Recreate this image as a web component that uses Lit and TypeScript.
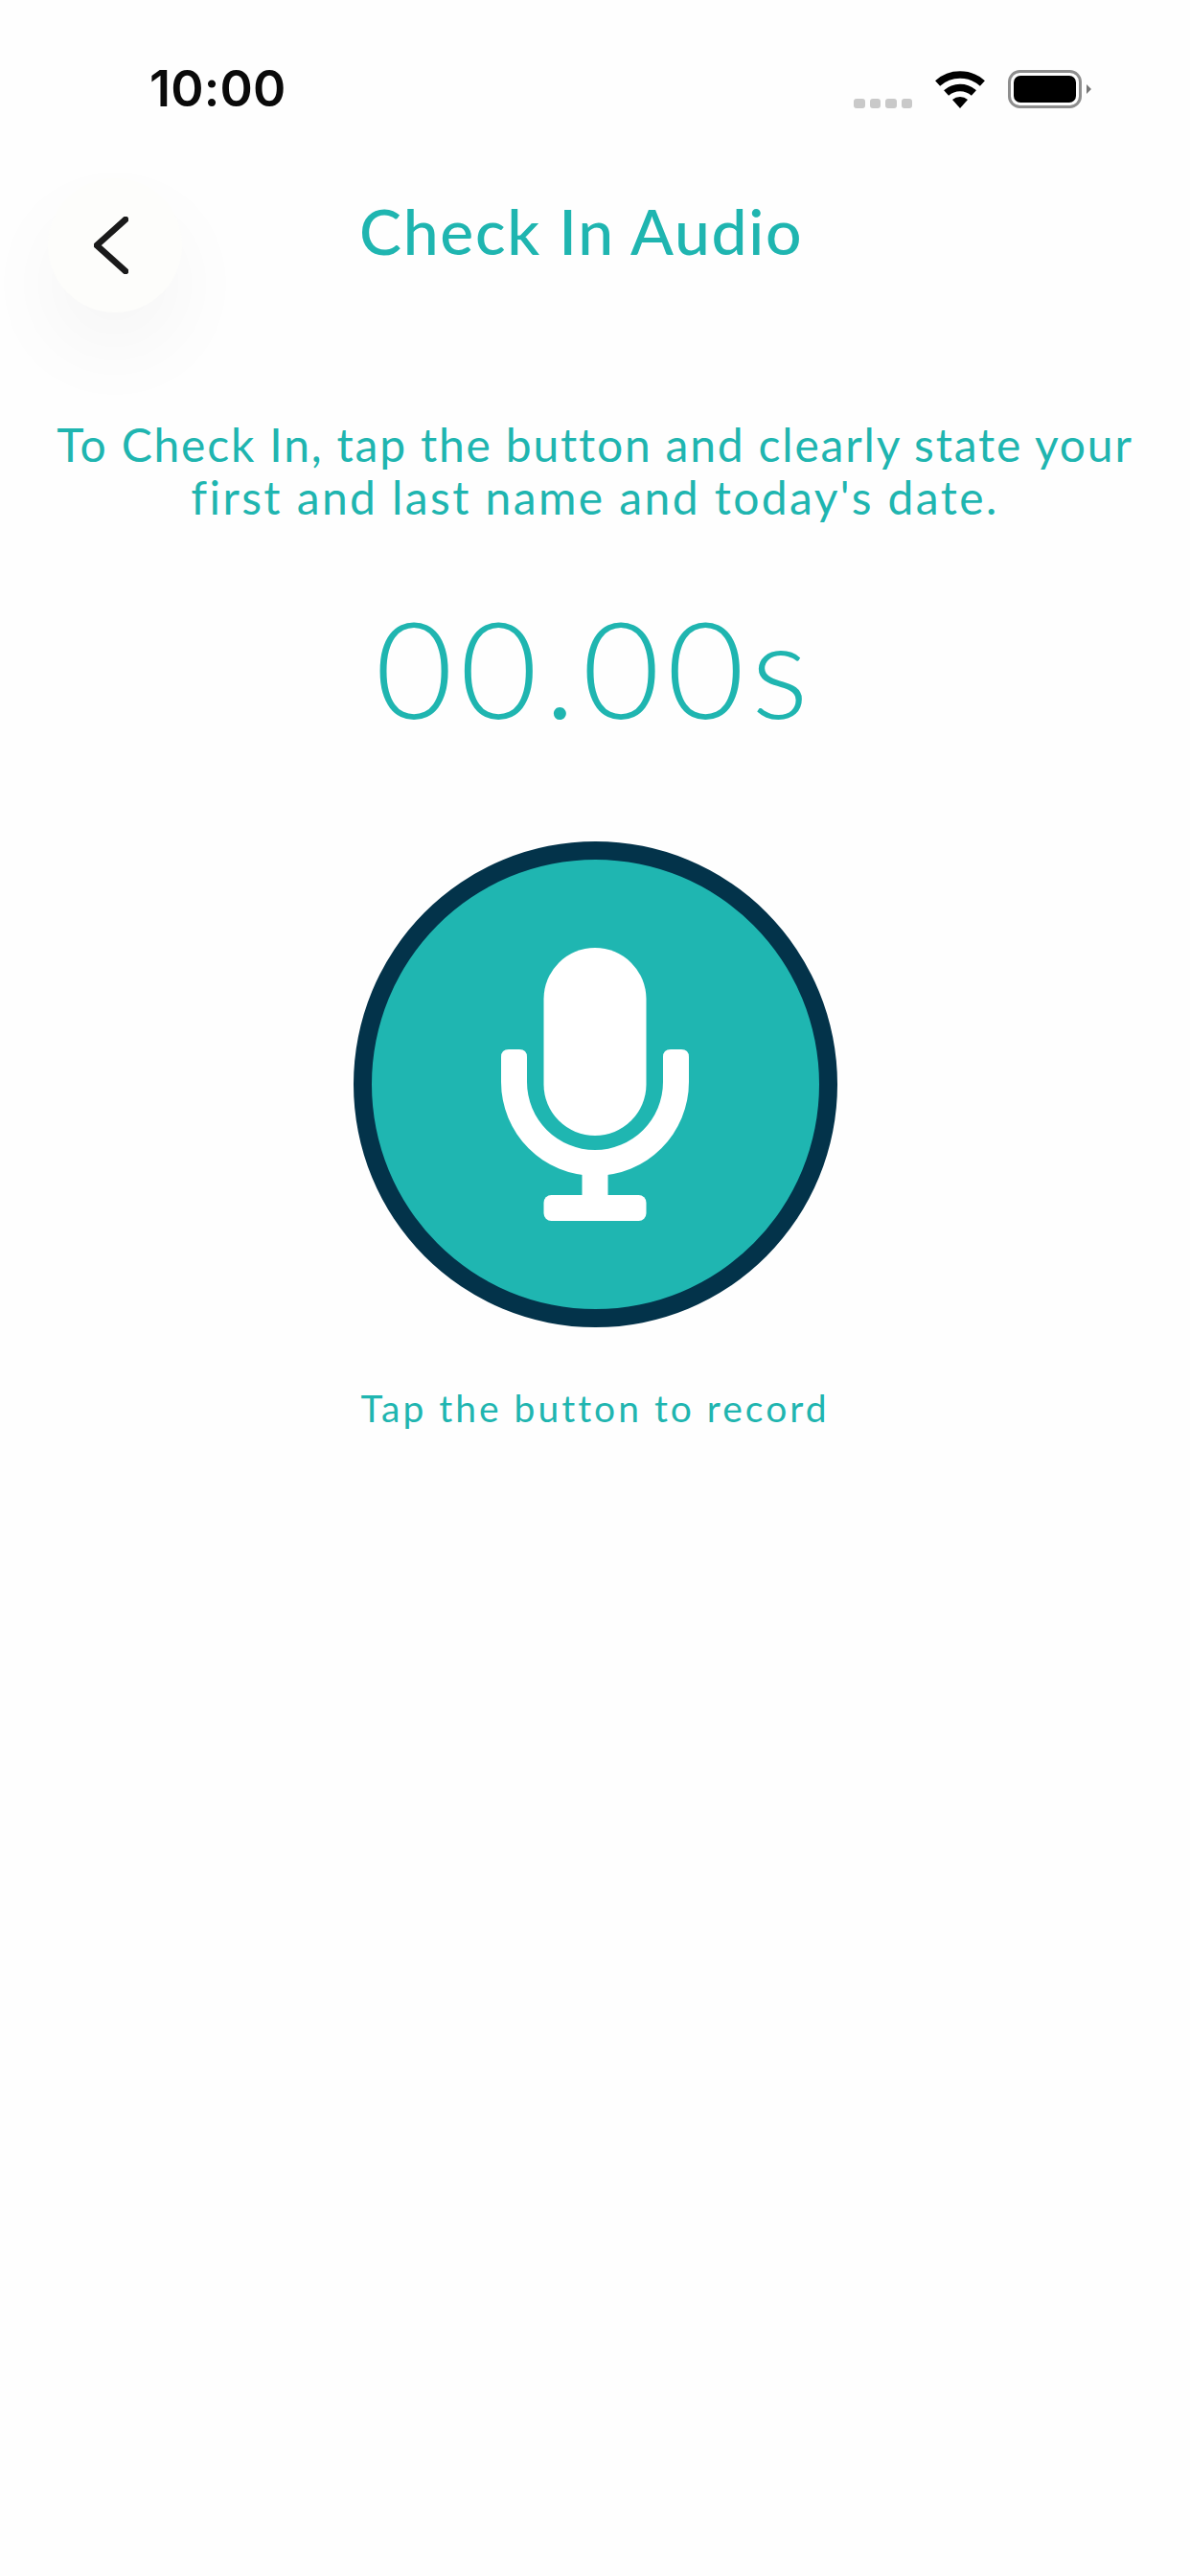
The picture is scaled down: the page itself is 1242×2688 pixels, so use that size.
import { LitElement, html, css } from "lit";
import { customElement } from "lit/decorators.js";

@customElement("app-root")
export class AppRoot extends LitElement {
  static styles = css`
    :host { display: block; width: 1242px; min-height: 2688px; background: #fefefe; font-family: Lato, "Open Sans", sans-serif; color: #1fb5b0; overflow: hidden; }
    .status { height: 186px; display: flex; align-items: center; justify-content: space-between; padding: 0 103px 0 156px; box-sizing: border-box; }
    .time { font-family: Inter, sans-serif; font-weight: 600; font-size: 52px; line-height: 60px; color: #0a0a0a; letter-spacing: 0.2px; }
    .icons { display: flex; align-items: flex-end; height: 40px; }
    .dots { display: flex; gap: 5px; }
    .dots i { width: 11.5px; height: 10px; border-radius: 3px; background: #c9c9c9; }
    .wifi { display: block; width: 52px; height: 39px; margin-left: 24px; }
    .batt { display: block; width: 87px; height: 40px; margin-left: 24px; }
    .header { display: flex; align-items: center; padding-left: 50px; gap: 185px; height: 140px; }
    .back { width: 140px; height: 140px; border-radius: 50%; background: #fdfdfb; box-shadow: 0 40px 90px rgba(0,0,0,.04); display: flex; align-items: center; justify-content: center; flex: none; }
    .back svg { display: block; width: 36px; height: 60px; margin-left: -8px; }
    h1 { margin: 0 0 30px; font-size: 66px; line-height: 80px; font-weight: 500; white-space: nowrap; letter-spacing: 1.7px; }
    .intro { margin: 110px 0 0; text-align: center; font-size: 48px; line-height: 55px; font-weight: 400; letter-spacing: 1.8px; white-space: nowrap; }
    .line { display: block; }
    .line.wide { letter-spacing: 2.4px; }
    .timer { margin-top: 65px; text-align: center; font-size: 140px; line-height: 170px; font-weight: 300; letter-spacing: 7px; }
    .mic { width: 505px; height: 507px; margin: 97px auto 0; box-sizing: border-box; border-radius: 50%; border: 19px solid #03334a; background: #1fb6b1; display: flex; align-items: center; justify-content: center; }
    .mic svg { display: block; width: 196px; height: 285px; }
    .hint { margin-top: 60px; text-align: center; font-size: 39px; line-height: 48px; letter-spacing: 3px; }
  `;

  render() {
    return html`
      <div class="status">
        <span class="time">10:00</span>
        <div class="icons">
          <div class="dots"><i></i><i></i><i></i><i></i></div>
          <svg class="wifi" viewBox="0 0 52 39">
            <path d="M2.6 13A35 35 0 0 1 49.4 13M11.6 23A21.5 21.5 0 0 1 40.4 23" fill="none" stroke="#000" stroke-width="7.5"/>
            <path d="M26 39L18 30A12 12 0 0 1 34 30Z" fill="#000"/>
          </svg>
          <svg class="batt" viewBox="0 0 87 40">
            <rect x="1.5" y="1.5" width="74" height="37" rx="11" fill="none" stroke="#8e8e8e" stroke-width="3"/>
            <rect x="6" y="6" width="65" height="28" rx="7" fill="#000"/>
            <path d="M82 15L87 20L82 25Z" fill="#777"/>
          </svg>
        </div>
      </div>
      <div class="header">
        <div class="back">
          <svg viewBox="0 0 36 60"><path d="M33 3L3 30L33 57" fill="none" stroke="#1a1a1a" stroke-width="6.5" stroke-linecap="round" stroke-linejoin="round"/></svg>
        </div>
        <h1>Check In Audio</h1>
      </div>
      <p class="intro"><span class="line">To Check In, tap the button and clearly state your</span><span class="line wide">first and last name and today's date.</span></p>
      <div class="timer">00.00s</div>
      <div class="mic">
        <svg viewBox="0 0 196 285">
          <rect x="44.5" y="0" width="107" height="196" rx="53.500" fill="#fff"/>
          <path d="M0 114Q0 106 8 106H19Q27 106 27 114V140A71 71 0 0 0 169 140V114Q169 106 177 106H188Q196 106 196 114V140A98 98 0 0 1 0 140Z" fill="#fff"/>
          <rect x="84.500" y="230" width="27" height="32" fill="#fff"/>
          <rect x="44.5" y="258" width="107" height="27" rx="8" fill="#fff"/>
        </svg>
      </div>
      <div class="hint">Tap the button to record</div>
    `;
  }
}
